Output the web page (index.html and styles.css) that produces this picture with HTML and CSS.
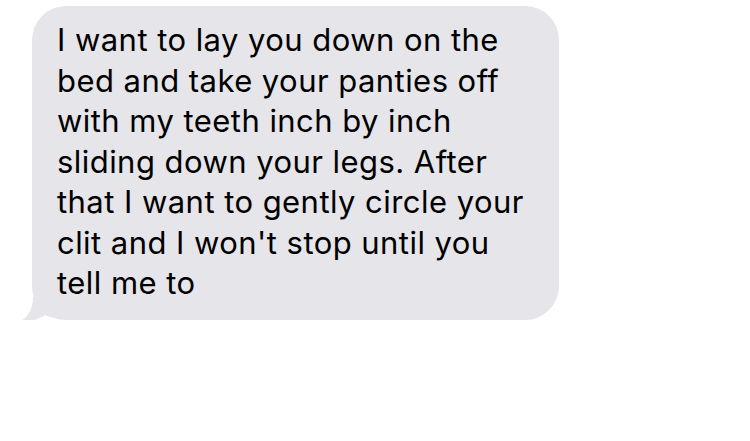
FILE: index.html
```html
<!DOCTYPE html>
<html>
<head>
<meta charset="utf-8">
<link rel="stylesheet" href="styles.css">
</head>
<body>
<div class="thread">
  <div class="bubble">
    <svg class="tail" width="40" height="26" viewBox="0 0 40 26"><path d="M12 0 C12 12 7 20 0 24 C10 25 18 22 24 18 C28 20 32 21 40 21 L40 0 Z" fill="#e5e5ea"/></svg>
    <p class="text">I want to lay you down on the<br>bed and take your panties off<br>with my teeth inch by inch<br>sliding down your legs. After<br>that I want to gently circle your<br>clit and I won't stop until you<br>tell me to</p>
  </div>
</div>
</body>
</html>
```
FILE: styles.css
```css
html, body { margin: 0; padding: 0; background: #fff; }
.thread { padding: 6px 0 0 32px; }
.bubble {
  position: relative;
  width: 527px;
  height: 314px;
  box-sizing: border-box;
  background: #e5e5ea;
  border-radius: 34px;
  padding: 14px 0 0 25px;
}
.tail { position: absolute; left: -11px; bottom: -3px; }
.text {
  position: relative;
  margin: 0;
  font-family: Inter, "Noto Sans", sans-serif;
  font-size: 31px;
  line-height: 40.5px;
  color: #000;
  letter-spacing: 0.45px;
  white-space: nowrap;
}
```
